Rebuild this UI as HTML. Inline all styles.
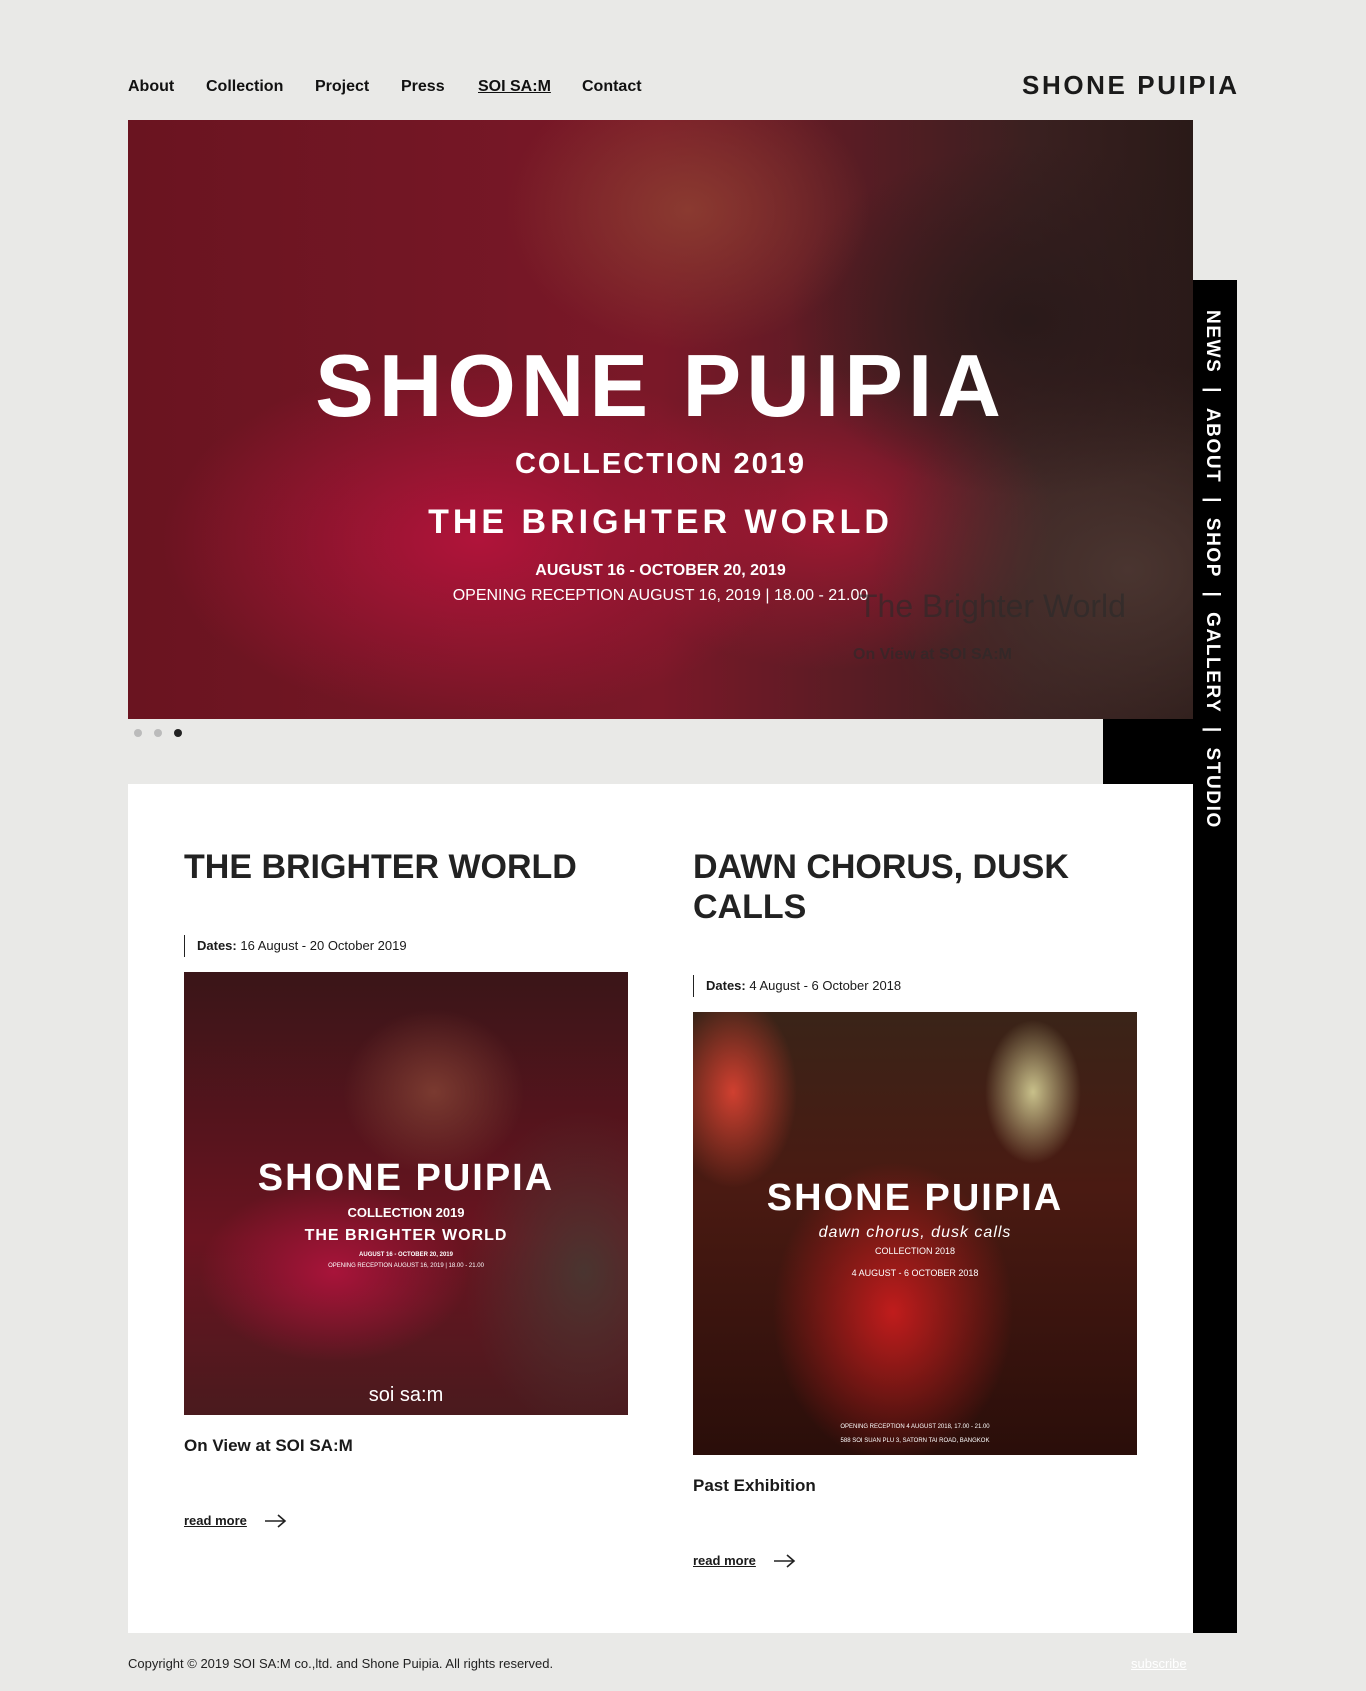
<!DOCTYPE html>
<html><head><meta charset="utf-8"><style>
*{margin:0;padding:0;box-sizing:border-box}
body{width:1366px;height:1691px;background:#e9e9e7;font-family:"Liberation Sans",sans-serif;color:#1a1a1a;position:relative;overflow:hidden}
.a{position:absolute;white-space:nowrap}
nav a{position:absolute;top:78px;font-size:16px;font-weight:bold;color:#111;text-decoration:none}
.hero{left:128px;top:120px;width:1065px;height:599px;overflow:hidden;
background:radial-gradient(ellipse 260px 200px at 560px 90px,#8a3a30 0%,transparent 70%),
radial-gradient(ellipse 300px 220px at 900px 200px,#2a1a1a 0%,transparent 80%),
radial-gradient(ellipse 320px 260px at 1000px 450px,#4a3530 0%,transparent 80%),
radial-gradient(ellipse 420px 240px at 350px 420px,#b0143a 0%,transparent 75%),
radial-gradient(ellipse 300px 200px at 700px 400px,#a01832 0%,transparent 75%),
linear-gradient(90deg,#6a1420,#7a1828 50%,#3a2020 85%,#2a1a18)}
.ht{color:#fff;text-align:center;width:1065px;left:0}
.side{left:1193px;top:280px;width:44px;height:1353px;background:#000}
.side div{position:absolute;left:8px;top:30px;writing-mode:vertical-rl;color:#fff;font-weight:bold;font-size:19px;letter-spacing:1.6px;white-space:nowrap}
.white{left:128px;top:784px;width:1065px;height:849px;background:#fff}
h2{position:absolute;font-size:34px;font-weight:bold;line-height:40px;color:#222;white-space:normal}
.dt{font-size:13px;border-left:1px solid #222;padding-left:12px;line-height:22px}
.sub{font-size:17px;font-weight:bold}
.rm{font-size:13px;font-weight:bold;text-decoration:underline}
.img1{left:184px;top:972px;width:444px;height:443px;overflow:hidden;
background:radial-gradient(ellipse 120px 110px at 250px 120px,#7a3a30 0%,transparent 75%),
radial-gradient(ellipse 180px 120px at 150px 300px,#a8143a 0%,transparent 75%),
radial-gradient(ellipse 150px 200px at 400px 300px,#4a3530 0%,transparent 80%),
linear-gradient(180deg,#3a1518,#6a1420 60%,#4a1a1e)}
.img2{left:693px;top:1012px;width:444px;height:443px;overflow:hidden;
background:radial-gradient(ellipse 60px 90px at 340px 80px,#c8c08a 0%,transparent 80%),
radial-gradient(ellipse 160px 200px at 200px 300px,#c01c1c 0%,transparent 75%),
radial-gradient(ellipse 80px 120px at 40px 80px,#d04030 0%,transparent 80%),
linear-gradient(180deg,#3a2418,#4a1a12 40%,#2a0e0a)}
.c{color:#fff;text-align:center;width:444px;left:0}
</style></head><body>
<nav>
<a style="left:128px">About</a>
<a style="left:206px">Collection</a>
<a style="left:315px">Project</a>
<a style="left:401px">Press</a>
<a style="left:478px;text-decoration:underline">SOI SA:M</a>
<a style="left:582px">Contact</a>
</nav>
<div class="a" style="left:1022px;top:70px;font-size:26px;font-weight:bold;letter-spacing:2.6px">SHONE PUIPIA</div>

<div class="a hero">
<div class="a ht" style="top:216px;font-size:88px;font-weight:bold;letter-spacing:5px;line-height:100px">SHONE PUIPIA</div>
<div class="a ht" style="top:328px;font-size:29px;font-weight:bold;letter-spacing:2px">COLLECTION 2019</div>
<div class="a ht" style="top:383px;font-size:34px;font-weight:bold;letter-spacing:4px">THE BRIGHTER WORLD</div>
<div class="a ht" style="top:442px;font-size:16px;font-weight:bold">AUGUST 16 - OCTOBER 20, 2019</div>
<div class="a ht" style="top:467px;font-size:16px">OPENING RECEPTION AUGUST 16, 2019 | 18.00 - 21.00</div>
<div class="a" style="left:730px;top:468px;font-size:32px;color:#2a2a2a;opacity:.6">The Brighter World</div>
<div class="a" style="left:725px;top:526px;font-size:16px;font-weight:bold;color:#2a2a2a;opacity:.6">On View at SOI SA:M</div>
</div>
<div class="a" style="left:134px;top:729px;width:8px;height:8px;border-radius:50%;background:#bbb"></div>
<div class="a" style="left:154px;top:729px;width:8px;height:8px;border-radius:50%;background:#bbb"></div>
<div class="a" style="left:174px;top:729px;width:8px;height:8px;border-radius:50%;background:#222"></div>
<div class="a" style="left:1103px;top:719px;width:90px;height:65px;background:#000"></div>
<div class="a side"><div>NEWS &nbsp;| &nbsp;ABOUT &nbsp;| &nbsp;SHOP &nbsp;| &nbsp;GALLERY &nbsp;| &nbsp;STUDIO</div></div>

<div class="a white"></div>
<h2 style="left:184px;top:847px">THE BRIGHTER WORLD</h2>
<h2 style="left:693px;top:847px;width:420px">DAWN CHORUS, DUSK CALLS</h2>
<div class="a dt" style="left:184px;top:935px"><b>Dates:</b> 16 August - 20 October 2019</div>
<div class="a dt" style="left:693px;top:975px"><b>Dates:</b> 4 August - 6 October 2018</div>
<div class="a img1">
<div class="a c" style="top:185px;font-size:38px;font-weight:bold;letter-spacing:2px">SHONE PUIPIA</div>
<div class="a c" style="top:233px;font-size:13px;font-weight:bold">COLLECTION 2019</div>
<div class="a c" style="top:255px;font-size:16px;font-weight:bold;letter-spacing:1px">THE BRIGHTER WORLD</div>
<div class="a c" style="top:280px;font-size:6px;font-weight:bold">AUGUST 16 - OCTOBER 20, 2019</div>
<div class="a c" style="top:291px;font-size:6px">OPENING RECEPTION AUGUST 16, 2019 | 18.00 - 21.00</div>
<div class="a c" style="top:412px;font-size:20px">soi sa:m</div>
</div>
<div class="a img2">
<div class="a c" style="top:165px;font-size:38px;font-weight:bold;letter-spacing:2px">SHONE PUIPIA</div>
<div class="a c" style="top:212px;font-size:16px;font-style:italic;letter-spacing:1px">dawn chorus, dusk calls</div>
<div class="a c" style="top:234px;font-size:9px">COLLECTION 2018</div>
<div class="a c" style="top:256px;font-size:9px">4 AUGUST - 6 OCTOBER 2018</div>
<div class="a c" style="top:412px;font-size:6px">OPENING RECEPTION 4 AUGUST 2018, 17.00 - 21.00</div>
<div class="a c" style="top:426px;font-size:6px">588 SOI SUAN PLU 3, SATORN TAI ROAD, BANGKOK</div>
</div>
<div class="a sub" style="left:184px;top:1436px">On View at SOI SA:M</div>
<div class="a sub" style="left:693px;top:1476px">Past Exhibition</div>
<div class="a rm" style="left:184px;top:1513px">read more</div>
<div class="a rm" style="left:693px;top:1553px">read more</div>
<svg class="a" style="left:265px;top:1514px" width="22" height="14"><path d="M0 7H20M13 1L20 7L13 13" stroke="#222" stroke-width="1.6" fill="none"/></svg>
<svg class="a" style="left:774px;top:1554px" width="22" height="14"><path d="M0 7H20M13 1L20 7L13 13" stroke="#222" stroke-width="1.6" fill="none"/></svg>
<div class="a" style="left:128px;top:1656px;font-size:13px;color:#222">Copyright © 2019 SOI SA:M co.,ltd. and Shone Puipia. All rights reserved.</div>
<div class="a" style="left:1131px;top:1656px;font-size:13px;color:#fff;text-decoration:underline">subscribe</div>
</body></html>
